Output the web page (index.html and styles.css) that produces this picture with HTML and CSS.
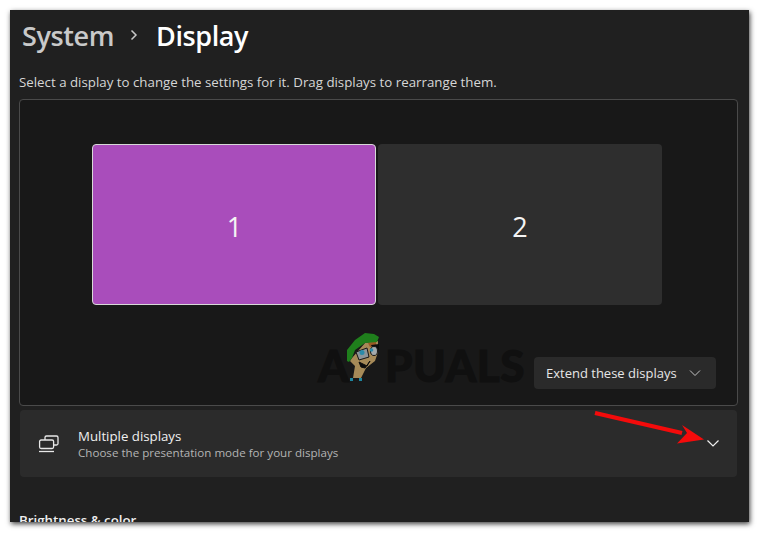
FILE: index.html
```html
<!DOCTYPE html>
<html lang="en">
<head>
    <meta charset="UTF-8">
    <title>Display settings</title>
    <link rel="stylesheet" href="styles.css">
</head>
<body>

<div class="window">
    <h1 class="crumb">
        <span class="crumb-parent">System</span>
        <svg class="crumb-sep" width="10" height="14" viewBox="0 0 10 14"><path d="M2.5 2.5 7 7l-4.500 4.500" fill="none" stroke="#c8c8c8" stroke-width="1.500"/></svg>
        <span class="crumb-current">Display</span>
    </h1>

    <p class="hint">Select a display to change the settings for it. Drag displays to rearrange them.</p>

    <div class="panel">
        <div class="monitors">
            <div class="monitor active">1</div>
            <div class="monitor">2</div>
        </div>

        <!-- watermark -->
        <div class="mark">
            <span>A</span>
            <span class="mark-rest">PUALS</span>
            <svg class="mark-face" width="50" height="60" viewBox="0 0 50 60">
                <path d="M12 30 25 15 38 13 38 24 35 33 26 40 21 50 13 50 15 38 10 33Z" fill="#a68a58"/>
                <path d="M28 15 36 13 36 18 30 19Z" fill="#9a5a24"/>
                <path d="M7 33 7 22 15 12 25 5 34 6 39 9 37 14 25 15 15 22 12 30 9 34Z" fill="#1f7f1c"/>
                <path d="M31 17 39 16 39 22 33 21Z" fill="#0c0c0c"/>
                <path d="M16 24 27 20 29 29 19 32Z" fill="#8d9599" stroke="#151515"/>
                <ellipse cx="34" cy="23" rx="3.500" ry="4.500" fill="#a4aaac" stroke="#151515"/>
                <circle cx="22" cy="24.500" r="2.500" fill="#2b8aa8"/>
                <circle cx="31.500" cy="22" r="1.800" fill="#2b8aa8"/>
                <path d="M19 34 27 38 30 33 25 40 21 39Z" fill="#0c0c0c" stroke="#0c0c0c"/>
                <path d="M10 50h3v3h-3zM19 50h3v3h-3z" fill="#1e86a0"/>
            </svg>
        </div>

        <button class="select">
            Extend these displays
            <svg width="12" height="8" viewBox="0 0 12 8"><path d="M1 1.500 6 6.500l5-5" fill="none" stroke="#c4c4c4" stroke-width="1"/></svg>
        </button>
    </div>

    <div class="card">
        <svg class="card-icon" width="22" height="18" viewBox="0 0 22 18">
            <path d="M7 5V2.500A1.500 1.500 0 0 1 8.500 1h10A1.500 1.500 0 0 1 20 2.500v6a1.500 1.500 0 0 1-1.500 1.500H16" fill="none" stroke="#e8e8e8" stroke-width="1.300"/>
            <rect x="1.600" y="5" width="14" height="8.500" rx="1.500" fill="#2b2b2b" stroke="#e8e8e8" stroke-width="1.300"/>
            <path d="M1 16.500h15" stroke="#e8e8e8" stroke-width="1.300"/>
        </svg>
        <div class="card-text">
            <div class="card-title">Multiple displays</div>
            <div class="card-sub">Choose the presentation mode for your displays</div>
        </div>
        <svg class="card-chevron" width="14" height="9" viewBox="0 0 14 9"><path d="M1.500 1.500 7 7l5.500-5.500" fill="none" stroke="#f0f0f0" stroke-width="1.200"/></svg>
    </div>

    <h2 class="section">Brightness &amp; color</h2>

    <!-- red arrow drawn over the card -->
    <svg class="arrow" width="112" height="36" viewBox="0 0 112 36">
        <path d="M1 2 88 22" stroke="#f40b0b" stroke-width="4.200" fill="none"/>
        <path d="M88 14 110 28.500 83 32.500 93 22Z" fill="#f40b0b"/>
    </svg>
</div>

</body>
</html>
```

FILE: styles.css
```css
* {
    margin: 0;
    padding: 0;
    box-sizing: border-box;
}

body {
    background: #fff;
    padding: 10px 11px 11px 10px;
    font-family: "Open Sans", "Noto Sans", sans-serif;
    overflow: hidden;
}

.window {
    position: relative;
    width: 739px;
    height: 512px;
    padding: 0 11px 0 9px;
    background: #202020;
    box-shadow: 1px 2px 5px rgba(0, 0, 0, .75);
    overflow: hidden;
    color: #fff;
}

.crumb {
    display: flex;
    align-items: center;
    height: 50px;
    padding-left: 3px;
    font-size: 27px;
    font-weight: 600;
    letter-spacing: -.4px;
}
.crumb-parent {
    color: #c9c9c9;
}
.crumb-sep {
    margin: 0 17px 0 15px;
}

.hint {
    margin-top: 13px;
    height: 26px;
    font-size: 13.300px;
    line-height: 18px;
    color: #d6d6d6;
}

.panel {
    position: relative;
    height: 307px;
    background: #181818;
    border: 1px solid #4a4a4a;
    border-radius: 4px;
}

.monitors {
    display: flex;
    gap: 2px;
    padding: 44px 0 0 72px;
}
.monitor {
    display: flex;
    align-items: center;
    justify-content: center;
    width: 284px;
    height: 161px;
    padding-top: 4px;
    background: #2e2e2e;
    border-radius: 4px;
    font-size: 27px;
    color: #f4f4f4;
}
.monitor.active {
    padding-left: 1px;
    background: #a94dbb;
    border: 1px solid #d8d8d8;
}

.mark {
    position: absolute;
    left: 298px;
    top: 233px;
    display: flex;
    height: 54px;
    padding-top: 10px;
    font-family: "Lato", sans-serif;
    font-size: 44px;
    font-weight: 900;
    line-height: 44px;
    color: #101010;
    -webkit-text-stroke: 1px #101010;
}
.mark-rest {
    margin-left: 36px;
    letter-spacing: .5px;
}
.mark-face {
    position: absolute;
    left: 22px;
    top: -5px;
}

.select {
    position: absolute;
    left: 514px;
    top: 257px;
    display: flex;
    align-items: center;
    justify-content: space-between;
    width: 182px;
    height: 32px;
    padding: 0 15px 0 12px;
    background: #2a2a2a;
    border: none;
    border-radius: 4px;
    font-family: inherit;
    font-size: 13px;
    color: #e6e6e6;
}

.card {
    display: flex;
    align-items: center;
    width: 717px;
    height: 67px;
    margin: 4px 0 0 1px;
    padding: 0 17px 0 18px;
    background: #2b2b2b;
    border-radius: 4px;
}
.card-icon {
    flex: none;
}
.card-text {
    flex: 1;
    margin-left: 18px;
}
.card-title {
    font-size: 13.250px;
    line-height: 18px;
    color: #f0f0f0;
}
.card-sub {
    font-size: 11.600px;
    line-height: 16px;
    color: #b4b4b4;
}

.section {
    margin-top: 34px;
    font-size: 13.300px;
    font-weight: 600;
    line-height: 18px;
    color: #f0f0f0;
}

.arrow {
    position: absolute;
    left: 584px;
    top: 401px;
}
```
